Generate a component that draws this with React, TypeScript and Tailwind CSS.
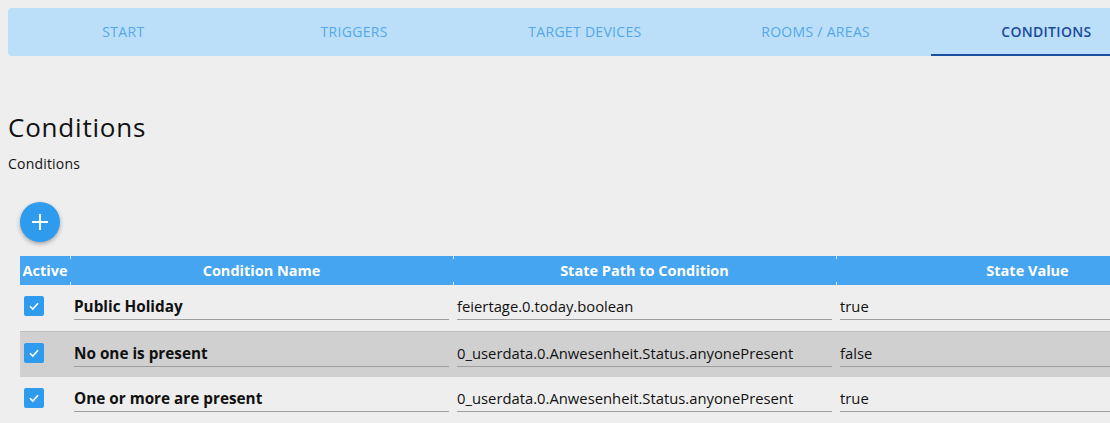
import React from "react";

const tabs = ["START", "TRIGGERS", "TARGET DEVICES", "ROOMS / AREAS", "CONDITIONS"];

const rows = [
  { name: "Public Holiday", path: "feiertage.0.today.boolean", value: "true" },
  { name: "No one is present", path: "0_userdata.0.Anwesenheit.Status.anyonePresent", value: "false" },
  { name: "One or more are present", path: "0_userdata.0.Anwesenheit.Status.anyonePresent", value: "true" },
];

function Check() {
  return (
    <div className="w-[20px] h-[20px] rounded-[2px] bg-[#2f9bef] flex items-center justify-center">
      <svg width="14" height="14" viewBox="0 0 14 14">
        <path d="M3 7.2 L5.8 10 L11 4.2" fill="none" stroke="white" strokeWidth="1.6" />
      </svg>
    </div>
  );
}

export default function App() {
  return (
    <div
      className="w-[1110px] h-[423px] overflow-hidden bg-[#eeeeee] text-[#111]"
      style={{ fontFamily: '"Open Sans", "Noto Sans", sans-serif' }}
    >
      <div className="pt-[8px] pl-[8px]">
        <div className="flex w-[1154px] h-[48px] bg-[#bbdff8] rounded-l-[4px]">
          {tabs.map((t, i) => (
            <div
              key={t}
              className={
                "w-[230.75px] shrink-0 flex items-center justify-center text-[14px] tracking-[0.3px] " +
                (i === 4
                  ? "text-[#1a4a9c] font-semibold border-b-[2px] border-[#1a4ea0]"
                  : "text-[#55a7ea] pb-[2px]")
              }
            >
              {t}
            </div>
          ))}
        </div>
      </div>

      <div className="pl-[8px] pt-[55px]">
        <h1 className="text-[26px] leading-[32px] tracking-[0.8px]">Conditions</h1>
        <p className="text-[14px] leading-[18px] mt-[12px] tracking-[0.2px]">Conditions</p>
      </div>

      <div className="pl-[20px] pt-[29px]">
        <div className="w-[40px] h-[40px] rounded-full bg-[#2f9bef] flex items-center justify-center shadow-[0_2px_4px_rgba(0,0,0,0.3)]">
          <svg width="20" height="20" viewBox="0 0 20 20">
            <path d="M10 2 V18 M2 10 H18" stroke="white" strokeWidth="2" />
          </svg>
        </div>
      </div>

      <div className="pl-[20px] pt-[14px]">
        <div className="w-[1200px]">
          <div className="relative flex h-[29px] bg-[#45a5f0] text-white font-bold text-[14.5px] items-center">
            <div className="w-[50px] shrink-0 text-center">Active</div>
            <div className="w-[383px] shrink-0 text-center">Condition Name</div>
            <div className="w-[383px] shrink-0 text-center">State Path to Condition</div>
            <div className="w-[383px] shrink-0 text-center">State Value</div>
            {[50, 433, 816].map((x) => (
              <React.Fragment key={x}>
                <div className="absolute top-0 w-[1px] h-[3px] bg-[#d8ecfb]" style={{ left: x }} />
                <div className="absolute bottom-0 w-[1px] h-[3px] bg-[#d8ecfb]" style={{ left: x }} />
              </React.Fragment>
            ))}
          </div>
          {rows.map((r, i) => (
            <div
              key={i}
              className={
                "flex h-[46px] items-start text-[14.8px] " +
                (i === 1 ? "bg-[#d0d0d0] border-t border-[#bdbdbd]" : "")
              }
            >
              <div className="w-[50px] shrink-0 pl-[4px] pt-[11px]">
                <Check />
              </div>
              <div className="w-[383px] shrink-0 px-[4px] pt-[5px]">
                <div className="border-b border-[#9e9e9e] h-[30px] flex items-center pt-[3px] font-bold text-[15.3px]">{r.name}</div>
              </div>
              <div className="w-[383px] shrink-0 px-[4px] pt-[5px]">
                <div className="border-b border-[#9e9e9e] h-[30px] flex items-center pt-[3px]">{r.path}</div>
              </div>
              <div className="w-[383px] shrink-0 px-[4px] pt-[5px]">
                <div className="border-b border-[#9e9e9e] h-[30px] flex items-center pt-[3px]">{r.value}</div>
              </div>
            </div>
          ))}
        </div>
      </div>
    </div>
  );
}
